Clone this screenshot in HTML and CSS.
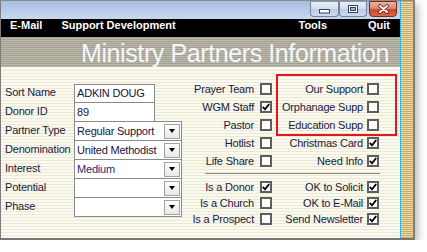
FILE: index.html
```html
<!DOCTYPE html>
<html>
<head>
<meta charset="utf-8">
<link rel="stylesheet" href="styles.css">
</head>
<body>
<div class="window">
  <div class="main">
    <div class="titlebar">
      <div class="wbtn min"><svg width="11" height="5" viewBox="0 0 11 5"><rect x="0.5" y="0.5" width="10" height="3.5" fill="#fff" stroke="#34445c"/></svg></div>
      <div class="wbtn max"><svg width="10" height="8" viewBox="0 0 10 8"><rect x="0.5" y="0.5" width="9" height="7" fill="#fff" stroke="#34445c"/><rect x="2.5" y="2.5" width="5" height="3" fill="#a8b8cc" stroke="#34445c"/></svg></div>
      <div class="wbtn close"><svg width="13" height="10" viewBox="0 0 13 10"><path d="M3 2 L10 8 M10 2 L3 8" stroke="#5c1c12" stroke-width="3.6" stroke-linecap="round" fill="none"/><path d="M3 2 L10 8 M10 2 L3 8" stroke="#fff" stroke-width="2" stroke-linecap="round" fill="none"/></svg></div>
    </div>
    <div class="menubar">
      <span class="mi">E-Mail</span>
      <span class="mi dev">Support Development</span>
      <span class="mi tools">Tools</span>
      <span class="mi quit">Quit</span>
    </div>
    <div class="header"><h1 class="title">Ministry Partners Information</h1></div>
    <div class="content">
      <div class="fields">
        <div class="frow first"><span class="flabel">Sort Name</span><div class="box short">ADKIN DOUG</div></div>
        <div class="frow"><span class="flabel">Donor ID</span><div class="box short">89</div></div>
        <div class="frow"><span class="flabel">Partner Type</span><div class="box long"><span>Regular Support</span><i class="dd"></i></div></div>
        <div class="frow"><span class="flabel">Denomination</span><div class="box long"><span>United Methodist</span><i class="dd"></i></div></div>
        <div class="frow"><span class="flabel">Interest</span><div class="box long"><span class="val">Medium</span><i class="dd"></i></div></div>
        <div class="frow"><span class="flabel">Potential</span><div class="box long"><span></span><i class="dd"></i></div></div>
        <div class="frow"><span class="flabel">Phase</span><div class="box long"><span></span><i class="dd"></i></div></div>
      </div>
      <div class="flags">
        <div class="grid top">
          <div class="cell"><span>Prayer Team</span><i class="cb"></i></div>
          <div class="cell right"><span>Our Support</span><i class="cb"></i></div>
          <div class="cell"><span>WGM Staff</span><i class="cb on"><svg width="8" height="8" viewBox="0 0 8 8"><path d="M0.8 3.8 L3 6.4 L7.2 1" stroke="#000" stroke-width="1.8" fill="none"/></svg></i></div>
          <div class="cell right"><span>Orphanage Supp</span><i class="cb"></i></div>
          <div class="cell"><span>Pastor</span><i class="cb"></i></div>
          <div class="cell right"><span>Education Supp</span><i class="cb"></i></div>
          <div class="cell"><span>Hotlist</span><i class="cb"></i></div>
          <div class="cell right"><span>Christmas Card</span><i class="cb on"><svg width="8" height="8" viewBox="0 0 8 8"><path d="M0.8 3.8 L3 6.4 L7.2 1" stroke="#000" stroke-width="1.8" fill="none"/></svg></i></div>
          <div class="cell"><span>Life Share</span><i class="cb"></i></div>
          <div class="cell right"><span>Need Info</span><i class="cb on"><svg width="8" height="8" viewBox="0 0 8 8"><path d="M0.8 3.8 L3 6.4 L7.2 1" stroke="#000" stroke-width="1.8" fill="none"/></svg></i></div>
        </div>
        <div class="sep"></div>
        <div class="grid bottom">
          <div class="cell"><span>Is a Donor</span><i class="cb on"><svg width="8" height="8" viewBox="0 0 8 8"><path d="M0.8 3.8 L3 6.4 L7.2 1" stroke="#000" stroke-width="1.8" fill="none"/></svg></i></div>
          <div class="cell right"><span>OK to Solicit</span><i class="cb on"><svg width="8" height="8" viewBox="0 0 8 8"><path d="M0.8 3.8 L3 6.4 L7.2 1" stroke="#000" stroke-width="1.8" fill="none"/></svg></i></div>
          <div class="cell"><span>Is a Church</span><i class="cb"></i></div>
          <div class="cell right"><span>OK to E-Mail</span><i class="cb on"><svg width="8" height="8" viewBox="0 0 8 8"><path d="M0.8 3.8 L3 6.4 L7.2 1" stroke="#000" stroke-width="1.8" fill="none"/></svg></i></div>
          <div class="cell"><span>Is a Prospect</span><i class="cb"></i></div>
          <div class="cell right"><span>Send Newsletter</span><i class="cb on"><svg width="8" height="8" viewBox="0 0 8 8"><path d="M0.8 3.8 L3 6.4 L7.2 1" stroke="#000" stroke-width="1.8" fill="none"/></svg></i></div>
        </div>
      </div>
    </div>
  </div>
  <div class="edge"></div>
  <div class="strip"></div>
  <div class="highlight"></div>
</div>
</body>
</html>
```

FILE: styles.css
```css
* { box-sizing: border-box; margin: 0; padding: 0; }
html, body { background: #ffffff; }
body {
  margin: 0;
  font-family: "Liberation Sans", Arial, sans-serif;
  font-size: 11px;
  color: #1a1a40;
  letter-spacing: -0.2px;
}
.window {
  position: relative;
  display: flex;
  width: 415px;
  height: 240px;
  border-left: 1px solid #7c7c7c;
  border-top: 1px solid #8a8a8a;
  border-right: 2px solid #808080;
  border-bottom: 2px solid #767676;
  box-shadow: 3px 4px 8px rgba(0, 0, 0, 0.28);
}
.main { width: 399px; display: flex; flex-direction: column; }
.edge { width: 1px; background: #2cb6f0; }
.strip {
  width: 12px;
  background: repeating-linear-gradient(to bottom, #c9aa68 0 1px, #ead8a6 1px 2px);
}

/* title bar */
.titlebar {
  height: 18px;
  background: linear-gradient(#a6bfe2, #c8d8ee);
  display: flex;
  justify-content: flex-end;
  align-items: flex-start;
  padding-right: 3px;
}
.wbtn {
  height: 16px;
  width: 28px;
  border: 1px solid #72829a;
  border-top-color: #8c9bb2;
  border-radius: 0 0 4px 4px;
  background: linear-gradient(#e6eef8 0%, #d2ddee 48%, #bccbe2 52%, #cddaee 100%);
  display: flex;
  align-items: center;
  justify-content: center;
}
.wbtn.min { width: 29px; padding-top: 5px; }
.wbtn.close {
  margin-left: 2px;
  border-color: #7c2a1c;
  background: linear-gradient(#eab2a2 0%, #dc8a72 45%, #c8462e 55%, #d8664a 100%);
}

/* menu bar */
.menubar {
  height: 18px;
  background: #000;
  color: #fff;
  font-weight: bold;
  letter-spacing: 0;
  line-height: 13px;
  display: flex;
  padding: 0 10px 0 9px;
}
.mi.dev { margin-left: 19px; }
.mi.tools { margin-left: auto; }
.mi.quit { margin-left: 41px; }

/* header */
.header {
  height: 30px;
  background: repeating-linear-gradient(to bottom, #a3a092 0 1px, #bdbaad 1px 2px);
  padding: 1px 0 0 80px;
}
.title {
  font-weight: normal;
  font-size: 25px;
  line-height: 30px;
  letter-spacing: -0.4px;
  color: #f3f6fb;
  white-space: nowrap;
}

/* content */
.content {
  flex: 1;
  border-top: 1px solid #fcfcf4;
  background: repeating-linear-gradient(to bottom, #fbfaf1 0 2px, #ebe9d4 2px 3px);
  display: flex;
  align-items: flex-start;
  padding: 12px 0 0 4px;
}
.fields { width: 178px; margin-top: 4px; }
.frow { display: flex; height: 20px; line-height: 18px; }
.frow + .frow { margin-top: -1px; }
.frow.first { height: 19px; line-height: 17px; }
.flabel { width: 69px; white-space: nowrap; }
.box {
  background: #fff;
  border: 1px solid #8a8a8a;
  padding-left: 2px;
  color: #14143c;
  white-space: nowrap;
}
.box.short { width: 81px; }
.box.long {
  width: 108px;
  display: flex;
  justify-content: space-between;
  align-items: center;
}
.val { color: #1c2a7c; }
.dd {
  width: 16px;
  height: 15px;
  margin-right: 1px;
  border: 1px solid #a2a2a2;
  background: linear-gradient(#fdfdfd, #e8e8e8);
  display: flex;
  align-items: center;
  justify-content: center;
}
.dd::after {
  content: "";
  border-left: 3.5px solid transparent;
  border-right: 3.5px solid transparent;
  border-top: 4px solid #000;
}

/* flags */
.flags { width: 197px; }
.grid { display: grid; grid-template-columns: 89px 107px; }
.grid.top { grid-auto-rows: 18px; }
.grid.bottom { grid-auto-rows: 16px; }
.cell {
  display: flex;
  justify-content: flex-end;
  align-items: center;
  gap: 6px;
  white-space: nowrap;
}
.cell.right { gap: 4px; }
.cb {
  width: 12px;
  height: 12px;
  border: 2px solid #5e5e5e;
  background: #fff;
  display: flex;
  align-items: center;
  justify-content: center;
}
.sep {
  margin: 3px 0 5px 22px;
  width: 175px;
  height: 1px;
  background: #8a8a8a;
}

/* annotation */
.highlight {
  position: absolute;
  left: 275px;
  top: 73px;
  width: 121px;
  height: 62px;
  border: 2px solid #e5161e;
  pointer-events: none;
}
```
